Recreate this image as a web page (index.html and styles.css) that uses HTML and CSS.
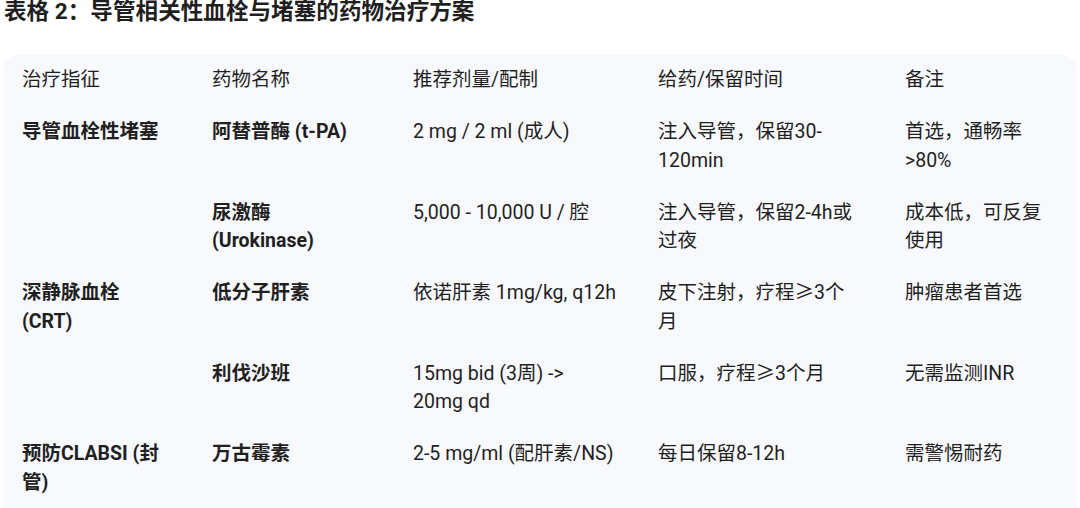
FILE: index.html
```html
<!DOCTYPE html>
<html lang="zh-CN">
<head>
<meta charset="utf-8">
<title>表格 2</title>
<link rel="stylesheet" href="styles.css">
</head>
<body>
<div class="page">
  <h2 class="title">表格 2：导管相关性血栓与堵塞的药物治疗方案</h2>
  <div class="table-wrap">
    <table class="drug-table">
      <colgroup>
        <col class="c1"><col class="c2"><col class="c3"><col class="c4"><col class="c5">
      </colgroup>
      <thead>
        <tr>
          <th>治疗指征</th>
          <th>药物名称</th>
          <th>推荐剂量/配制</th>
          <th>给药/保留时间</th>
          <th>备注</th>
        </tr>
      </thead>
      <tbody>
        <tr>
          <td class="strong">导管血栓性堵塞</td>
          <td class="strong">阿替普酶 (t-PA)</td>
          <td>2 mg / 2 ml (成人)</td>
          <td>注入导管，保留30-<br>120min</td>
          <td>首选，通畅率<br>&gt;80%</td>
        </tr>
        <tr>
          <td class="strong"></td>
          <td class="strong">尿激酶<br>(Urokinase)</td>
          <td>5,000 - 10,000 U / 腔</td>
          <td>注入导管，保留2-4h或<br>过夜</td>
          <td>成本低，可反复<br>使用</td>
        </tr>
        <tr>
          <td class="strong">深静脉血栓<br>(CRT)</td>
          <td class="strong">低分子肝素</td>
          <td>依诺肝素 1mg/kg, q12h</td>
          <td>皮下注射，疗程<span class="cjk">≥</span>3个<br>月</td>
          <td>肿瘤患者首选</td>
        </tr>
        <tr>
          <td class="strong"></td>
          <td class="strong">利伐沙班</td>
          <td>15mg bid (3周) -&gt;<br>20mg qd</td>
          <td>口服，疗程<span class="cjk">≥</span>3个月</td>
          <td>无需监测INR</td>
        </tr>
        <tr>
          <td class="strong">预防CLABSI (封<br>管)</td>
          <td class="strong">万古霉素</td>
          <td>2-5 mg/ml (配肝素/NS)</td>
          <td>每日保留8-12h</td>
          <td>需警惕耐药</td>
        </tr>
      </tbody>
    </table>
  </div>
</div>
</body>
</html>
```
FILE: styles.css
```css
html, body {
  margin: 0;
  padding: 0;
  background: #ffffff;
}

body {
  font-family: Roboto, "Noto Sans CJK SC", sans-serif;
  color: #1f1f1f;
  overflow: hidden;
}

.page {
  padding: 0 3px;
}

.title {
  margin: 0 0 31px 1px;
  font-size: 22.6px;
  line-height: 24px;
  font-weight: 700;
  color: #1f1f1f;
}

.table-wrap {
  background: #f8f9fc;
  border-radius: 16px;
  padding-bottom: 20px;
}

.drug-table {
  width: 100%;
  table-layout: fixed;
  border-collapse: separate;
  border-spacing: 0;
  font-size: 19.5px;
  line-height: 28.25px;
}

.c1 { width: 190px; }
.c2 { width: 201px; }
.c3 { width: 245px; }
.c4 { width: 247px; }

.drug-table th,
.drug-table td {
  text-align: left;
  vertical-align: top;
  padding: 11px 4px 13px 19px;
  white-space: nowrap;
}

.drug-table th {
  font-weight: 400;
  color: #1f1f1f;
}

.drug-table td.strong {
  font-weight: 700;
}

.cjk {
  font-family: "Noto Sans CJK SC", sans-serif;
  line-height: 1;
}
```
